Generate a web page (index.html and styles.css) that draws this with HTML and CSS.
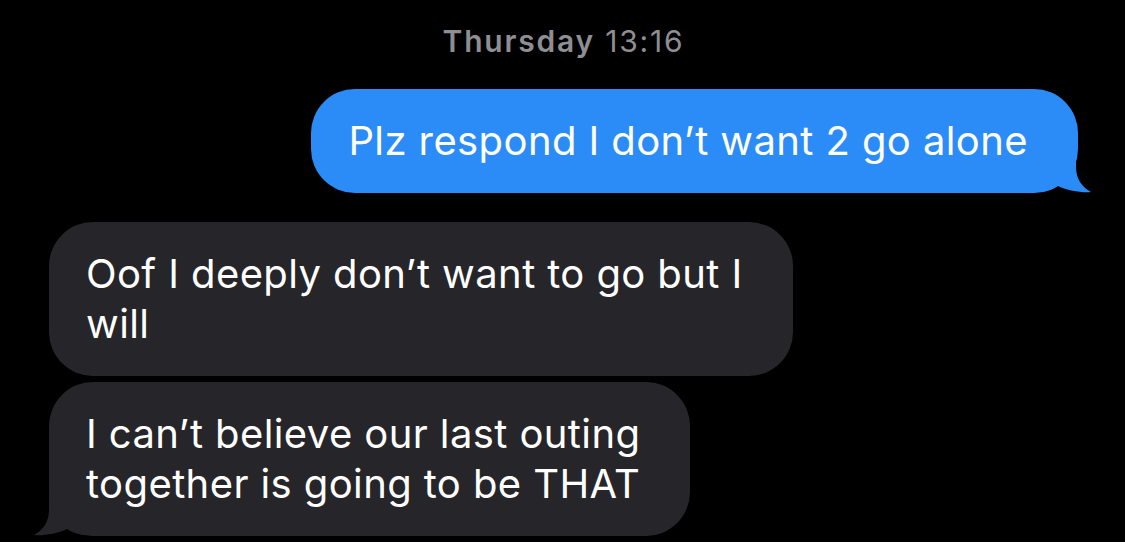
FILE: index.html
```html
<!DOCTYPE html>
<html lang="en">
<head>
    <meta charset="UTF-8">
    <meta name="viewport" content="width=device-width, initial-scale=1.0">
    <title>Messages</title>
    <link rel="stylesheet" href="styles.css">
</head>
<body>

    <div class="thread">
        <p class="stamp"><b>Thursday</b> 13:16</p>

        <div class="bubble sent">
            Plz respond I don’t want 2 go alone
            <svg class="tail" width="55" height="44" viewBox="0 0 55 44">
                <path d="M0 0 H38 V18 C38 30 44 38 53 43 C45 44 30 42 20 37 C14 41 7 43 0 43 Z"/>
            </svg>
        </div>

        <div class="bubble received">
            Oof I deeply don’t want to go but I<br>will
        </div>

        <div class="bubble received last">
            I can’t believe our last outing<br>together is going to be THAT
            <svg class="tail" width="55" height="44" viewBox="0 0 55 44">
                <path d="M55 0 H17 V18 C17 30 11 38 2 43 C10 44 25 42 35 37 C41 41 48 43 55 43 Z"/>
            </svg>
        </div>
    </div>

</body>
</html>
```

FILE: styles.css
```css
body {
    margin: 0;
    background-color: #000;
    font-family: Inter, "Liberation Sans", sans-serif;
    color: #fff;
    width: 1125px;
    height: 542px;
    overflow: hidden;
}

.thread {
    display: flex;
    flex-direction: column;
    padding: 0 47px 0 49px;
}

.stamp {
    margin: 24px 0 0;
    text-align: center;
    font-size: 30px;
    line-height: 34px;
    letter-spacing: 1.8px;
    color: #8e8e93;
}

.stamp b {
    font-weight: 600;
}

.bubble {
    position: relative;
    font-size: 40px;
    line-height: 50px;
    letter-spacing: 0.4px;
    padding: 27px 50px 27px 37px;
    border-radius: 44px;
}

.bubble .tail {
    position: absolute;
    bottom: 0;
    z-index: -1;
}

.sent {
    align-self: flex-end;
    margin-top: 31px;
    background-color: #2b8cf8;
}

.sent .tail {
    right: -15px;
    fill: #2b8cf8;
}

.received {
    align-self: flex-start;
    margin-top: 29px;
    background-color: #262529;
}

.received.last {
    margin-top: 6px;
}

.received .tail {
    left: -17px;
    fill: #262529;
}
```
